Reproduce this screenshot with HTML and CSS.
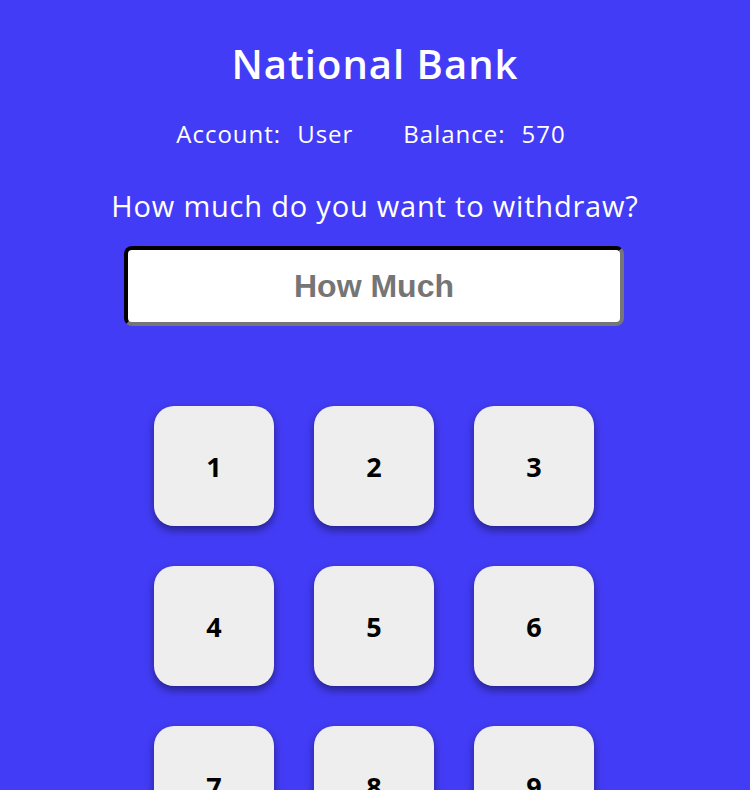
FILE: index.html
```html
<!DOCTYPE html>
<html lang="en">
<head>
<meta charset="utf-8">
<title>National Bank</title>
<link rel="stylesheet" href="styles.css">
</head>
<body>
<main class="atm">
  <h1 class="title">National Bank</h1>
  <div class="info">
    <span class="info-item"><span class="label">Account:</span><span class="value">User</span></span>
    <span class="info-item"><span class="label">Balance:</span><span class="value">570</span></span>
  </div>
  <p class="question">How much do you want to withdraw?</p>
  <input class="amount" type="text" placeholder="How Much">
  <div class="keypad">
    <button class="key">1</button>
    <button class="key">2</button>
    <button class="key">3</button>
    <button class="key">4</button>
    <button class="key">5</button>
    <button class="key">6</button>
    <button class="key">7</button>
    <button class="key">8</button>
    <button class="key">9</button>
  </div>
</main>
</body>
</html>
```
FILE: styles.css
```css
html, body {
  margin: 0;
  padding: 0;
  background: #433cf6;
}
body {
  font-family: "Open Sans", "DejaVu Sans", sans-serif;
  color: #ffffff;
}
.atm {
  display: flex;
  flex-direction: column;
  align-items: center;
  padding-top: 39px;
}
.title {
  margin: 0;
  font-size: 40px;
  font-weight: 600;
  line-height: 50px;
  letter-spacing: 1px;
}
.info {
  display: flex;
  gap: 50px;
  margin-top: 30px;
  margin-right: 8px;
  font-size: 24px;
  line-height: 30px;
  letter-spacing: 1px;
}
.info-item {
  display: flex;
  gap: 16px;
}
.question {
  margin: 39px 0 0;
  font-size: 29px;
  line-height: 36px;
  letter-spacing: 0.8px;
}
.amount {
  box-sizing: border-box;
  width: 500px;
  height: 80px;
  margin-top: 22px;
  margin-right: 2px;
  border: 4px inset #767676;
  border-color: #222222 #767676 #767676 #222222;
  border-radius: 8px;
  background: #ffffff;
  font-family: "Liberation Sans", Arial, sans-serif;
  font-size: 32px;
  font-weight: 700;
  text-align: center;
  color: #000;
}
.amount::placeholder {
  color: #757575;
}
.keypad {
  display: grid;
  grid-template-columns: repeat(3, 120px);
  gap: 40px;
  margin-top: 80px;
  margin-right: 2px;
}
.key {
  width: 120px;
  height: 120px;
  border: none;
  border-radius: 20px;
  background: #eeeeee;
  box-shadow: 0 4px 8px rgba(0, 0, 0, 0.45);
  font-family: "Open Sans", sans-serif;
  font-size: 27px;
  font-weight: 700;
  color: #000;
}
```
